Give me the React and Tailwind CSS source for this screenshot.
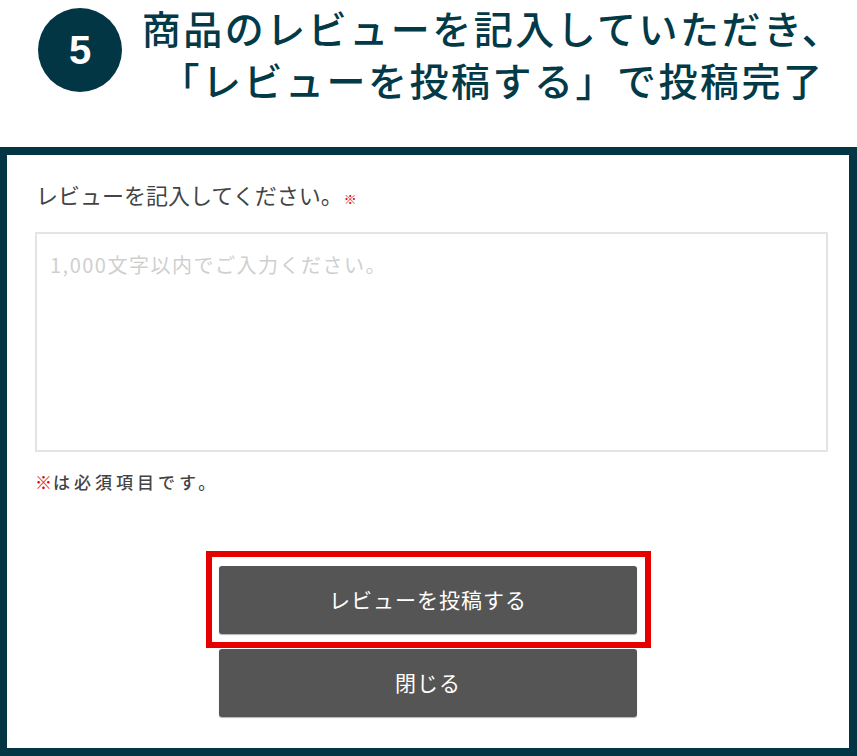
export default function App() {
  const jp = { fontFamily: '"Noto Sans CJK JP", "Noto Sans", sans-serif' };
  return (
    <div className="w-[857px] h-[756px] bg-white overflow-hidden flex flex-col" style={jp}>
      <div className="h-[147px] flex items-start">
        <div className="ml-[38px] mt-[8px] w-[84px] h-[84px] rounded-full bg-[#033645] flex items-center justify-center text-white text-[40px] font-bold leading-none" style={{ fontFamily: '"Liberation Sans", Arial, sans-serif' }}>
          5
        </div>
        <div className="flex-1 flex flex-col items-center text-[#033a48] text-[39px] font-medium leading-[52px] pt-[1px] pl-[6px] tracking-[2.5px]">
          <div>商品のレビューを記入していただき、</div>
          <div>「レビューを投稿する」で投稿完了</div>
        </div>
      </div>
      <div className="flex-1 border-[#033645] border-t-[8px] border-b-[8px] border-l-[7px] border-r-[8px] flex flex-col">
        <div className="mt-[24px] ml-[29px] flex items-baseline text-[#444] text-[22px] leading-[30px]">
          <span>レビューを記入してください。</span>
          <span className="text-[#e60012] text-[13px] ml-[1px]">※</span>
        </div>
        <div className="mt-[18px] ml-[28px] w-[793px] h-[220px] border-2 border-[#e4e4e4] px-[13px] pt-[16px] text-[20px] text-[#cfcfcf] leading-[30px] tracking-[1.5px]">
          1,000文字以内でご入力ください。
        </div>
        <div className="mt-[16px] ml-[28px] text-[17px] text-[#444] font-medium leading-[28px] tracking-[4px]">
          <span className="text-[#e60012] tracking-[1px]">※</span>は必須項目です。
        </div>
        <div className="mt-[55px] flex flex-col items-center">
          <div className="w-[445px] h-[97px] border-[6px] border-[#e60000] flex items-center justify-center">
            <button className="w-[418px] h-[68px] bg-[#555555] rounded-[3px] text-white text-[21px] tracking-[1px] shadow-[0_1px_1px_rgba(0,0,0,0.3)]">
              レビューを投稿する
            </button>
          </div>
          <button className="mt-[1px] w-[418px] h-[68px] bg-[#555555] rounded-[3px] text-white text-[21px] tracking-[1px] shadow-[0_1px_1px_rgba(0,0,0,0.3)]">
            閉じる
          </button>
        </div>
      </div>
    </div>
  );
}
